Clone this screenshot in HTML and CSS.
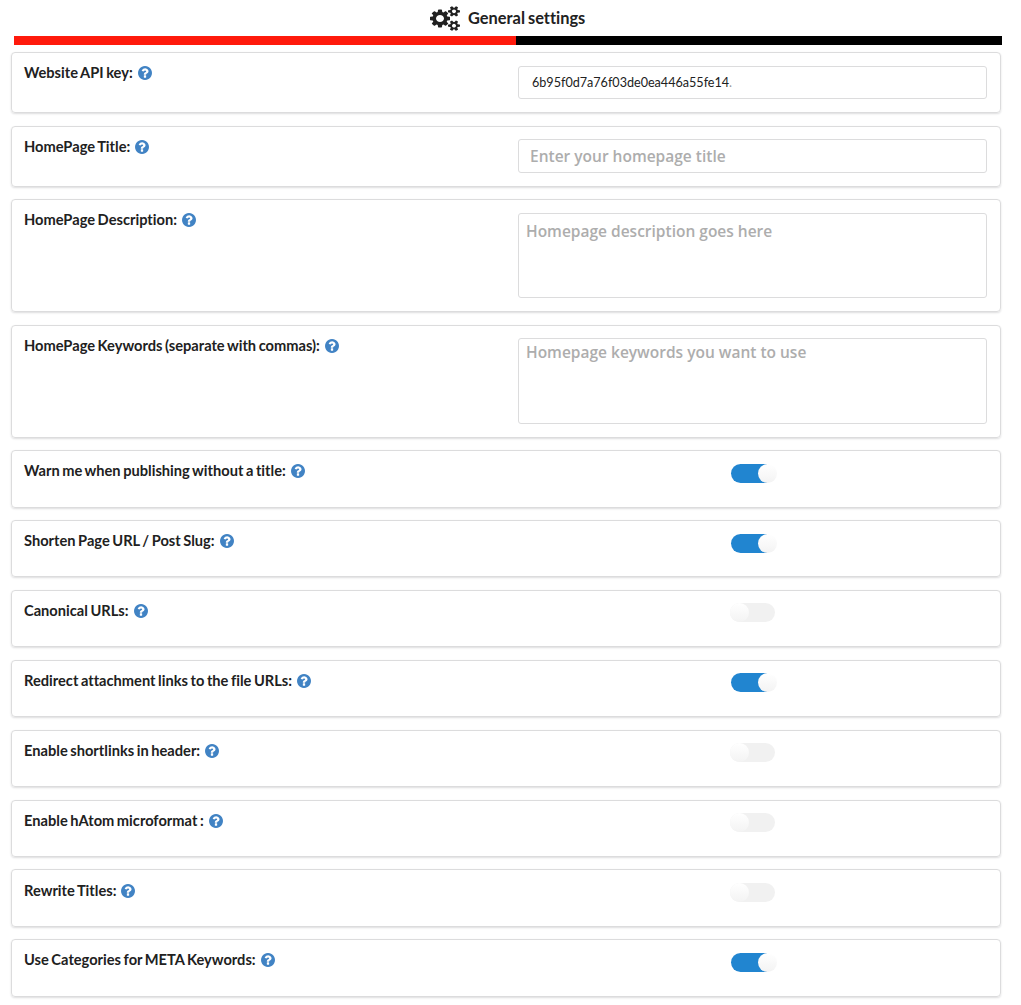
FILE: index.html
```html
<!DOCTYPE html>
<html lang="en">
<head>
<meta charset="utf-8">
<title>General settings</title>
<link rel="stylesheet" href="styles.css">
</head>
<body>
<svg class="defs" aria-hidden="true">
  <symbol id="help" viewBox="128 128 1536 1536"><path d="M1024 1376v-192q0-14-9-23t-23-9h-192q-14 0-23 9t-9 23v192q0 14 9 23t23 9h192q14 0 23-9t9-23zm256-672q0-88-55.500-163t-138.500-116-170-41q-243 0-371 213-15 24 8 42l132 100q7 6 19 6 16 0 25-12 53-68 86-92 34-24 86-24 48 0 85.500 26t37.500 59q0 38-20 61t-68 45q-63 28-115.500 86.500t-52.500 125.500v36q0 14 9 23t23 9h192q14 0 23-9t9-23q0-19 21.500-49.500t54.500-49.500q32-18 49-28.500t46-35 44.500-48 28-60.500 12.500-81zm384 192q0 209-103 385.500t-279.500 279.500-385.500 103-385.500-103-279.500-279.500-103-385.500 103-385.500 279.500-279.500 385.500-103 385.500 103 279.500 279.500 103 385.500z"/></symbol>
</svg>
<header class="title">
  <svg class="cogs" viewBox="0 0 1920 1792" preserveAspectRatio="none"><path d="M896 896q0-106-75-181t-181-75-181 75-75 181 75 181 181 75 181-75 75-181zm768 512q0-52-38-90t-90-38-90 38-38 90q0 53 37.500 90.500t90.500 37.500 90.500-37.500 37.500-90.500zm0-1024q0-52-38-90t-90-38-90 38-38 90q0 53 37.500 90.500t90.500 37.500 90.500-37.500 37.500-90.500zm-384 421v185q0 10-7 19.500t-16 10.500l-155 24q-11 35-32 76 34 48 90 115 7 11 7 20 0 12-7 19-23 30-82.500 89.500t-78.500 59.500q-11 0-21-7l-115-90q-37 19-77 31-11 108-23 155-7 24-30 24h-186q-11 0-20-7.500t-10-17.500l-23-153q-34-10-75-31l-118 89q-7 7-20 7-11 0-21-8-144-133-144-160 0-9 7-19 10-14 41-53t47-61q-23-44-35-82l-152-24q-10-1-17-9.500t-7-19.500v-185q0-10 7-19.500t16-10.500l155-24q11-35 32-76-34-48-90-115-7-11-7-20 0-12 7-20 22-30 82-89t79-59q11 0 21 7l115 90q34-18 77-32 11-108 23-154 7-24 30-24h186q11 0 20 7.500t10 17.500l23 153q34 10 75 31l118-89q8-7 20-7 11 0 21 8 144 133 144 160 0 8-7 19-12 16-42 54t-45 60q23 48 34 82l152 23q10 2 17 10.500t7 19.500zm640 533v140q0 16-149 31-12 27-30 52 51 113 51 138 0 4-4 7-122 71-124 71-8 0-46-47t-52-68q-20 2-30 2t-30-2q-14 21-52 68t-46 47q-2 0-124-71-4-3-4-7 0-25 51-138-18-25-30-52-149-15-149-31v-140q0-16 149-31 13-29 30-52-51-113-51-138 0-4 4-7 4-2 35-20t59-34 30-16q8 0 46 46.500t52 67.500q20-2 30-2t30 2q51-71 92-112l6-2q4 0 124 70 4 3 4 7 0 25-51 138 17 23 30 52 149 15 149 31zm0-1024v140q0 16-149 31-12 27-30 52 51 113 51 138 0 4-4 7-122 71-124 71-8 0-46-47t-52-68q-20 2-30 2t-30-2q-14 21-52 68t-46 47q-2 0-124-71-4-3-4-7 0-25 51-138-18-25-30-52-149-15-149-31v-140q0-16 149-31 13-29 30-52-51-113-51-138 0-4 4-7 4-2 35-20t59-34 30-16q8 0 46 46.500t52 67.500q20-2 30-2t30 2q51-71 92-112l6-2q4 0 124 70 4 3 4 7 0 25-51 138 17 23 30 52 149 15 149 31z"/></svg>
  <h1>General settings</h1>
</header>
<div class="progress"><div class="progress-done"></div></div>
<main class="cards">
  <section class="card"><div class="label"><span>Website API key:</span><svg class="help"><use href="#help"/></svg></div><div class="field key">6b95f0d7a76f03de0ea446a55fe14<span class="faded">.</span></div></section>
  <section class="card spaced"><div class="label"><span>HomePage Title:</span><svg class="help"><use href="#help"/></svg></div><div class="field hint raised single">Enter your homepage title</div></section>
  <section class="card tall"><div class="label"><span>HomePage Description:</span><svg class="help"><use href="#help"/></svg></div><div class="field hint area">Homepage description goes here</div></section>
  <section class="card tall spaced"><div class="label"><span>HomePage Keywords (separate with commas):</span><svg class="help"><use href="#help"/></svg></div><div class="field hint area keywords raised">Homepage keywords you want to use</div></section>
  <section class="card medium"><div class="label"><span>Warn me when publishing without a title:</span><svg class="help"><use href="#help"/></svg></div><div class="toggle on"></div></section>
  <section class="card short"><div class="label"><span>Shorten Page URL / Post Slug:</span><svg class="help"><use href="#help"/></svg></div><div class="toggle on"></div></section>
  <section class="card short spaced"><div class="label"><span>Canonical URLs:</span><svg class="help"><use href="#help"/></svg></div><div class="toggle raised"></div></section>
  <section class="card short spaced"><div class="label"><span>Redirect attachment links to the file URLs:</span><svg class="help"><use href="#help"/></svg></div><div class="toggle on raised"></div></section>
  <section class="card short spaced"><div class="label"><span>Enable shortlinks in header:</span><svg class="help"><use href="#help"/></svg></div><div class="toggle raised"></div></section>
  <section class="card short spaced"><div class="label"><span>Enable hAtom microformat :</span><svg class="help"><use href="#help"/></svg></div><div class="toggle raised"></div></section>
  <section class="card medium"><div class="label lowered"><span>Rewrite Titles:</span><svg class="help"><use href="#help"/></svg></div><div class="toggle"></div></section>
  <section class="card medium"><div class="label"><span>Use Categories for META Keywords:</span><svg class="help"><use href="#help"/></svg></div><div class="toggle on"></div></section>
</main>
</body>
</html>
```
FILE: styles.css
```css
* { box-sizing: border-box; }
body { margin: 0; height: 1005px; overflow: hidden; background: #fff; color: #212121; font-family: Lato, sans-serif; font-variant-ligatures: none; }
.defs { display: none; }
.title { display: flex; align-items: center; height: 36px; padding-left: 430px; gap: 8px; }
.title h1 { margin: 0; font-size: 16.4px; font-weight: 700; line-height: 20px; word-spacing: -1px; white-space: nowrap; }
.cogs { width: 30px; height: 25px; fill: #212121; }
.progress { height: 9px; margin: 0 19px 0 14px; background: #000; }
.progress-done { width: 502px; height: 9px; background: #ff1a0c; }
.cards { display: flex; flex-direction: column; gap: 12px; width: 990px; margin: 7px 0 0 11px; }
.card { display: grid; grid-template-columns: 494px 469px; align-items: start; height: 61px; padding: 13px 0 0 12px; border: 1px solid #dcdcdd; border-radius: 4px; box-shadow: 0 1px 2px rgba(34, 36, 38, .15); }
.spaced { margin-top: 1px; }
.tall { height: 113px; }
.medium { height: 58px; }
.short { height: 57px; }
.label { display: flex; align-items: center; gap: 5px; height: 14px; font-size: 14.65px; font-weight: 700; line-height: 14px; word-spacing: -1px; white-space: nowrap; }
.lowered { margin-top: 1px; }
.help { width: 14px; height: 14px; fill: #4183c4; }
.field { height: 33px; border: 1px solid #dcdcdd; border-radius: 3px; line-height: 31px; white-space: nowrap; }
.key { padding-left: 13px; font-size: 12.6px; }
.faded { color: #999; }
.hint { padding-left: 11px; color: #adadad; font-family: "Open Sans", sans-serif; font-size: 15.5px; font-weight: 600; }
.single { height: 34px; line-height: 32px; }
.area { height: 85px; padding: 2px 0 0 7px; }
.keywords { height: 86px; padding-top: 0; line-height: 27px; }
.raised { margin-top: -1px; }
.toggle { display: flex; width: 45px; height: 19px; margin-left: 212px; border-radius: 10px; background: #f1f1f1; }
.toggle::before { content: ""; width: 19px; height: 19px; border-radius: 50%; background: linear-gradient(#fff, #f3f3f3); }
.on { width: 46px; margin-left: 213px; justify-content: flex-end; background: linear-gradient(90deg, #2185d0 36px, transparent 36px); }
```
